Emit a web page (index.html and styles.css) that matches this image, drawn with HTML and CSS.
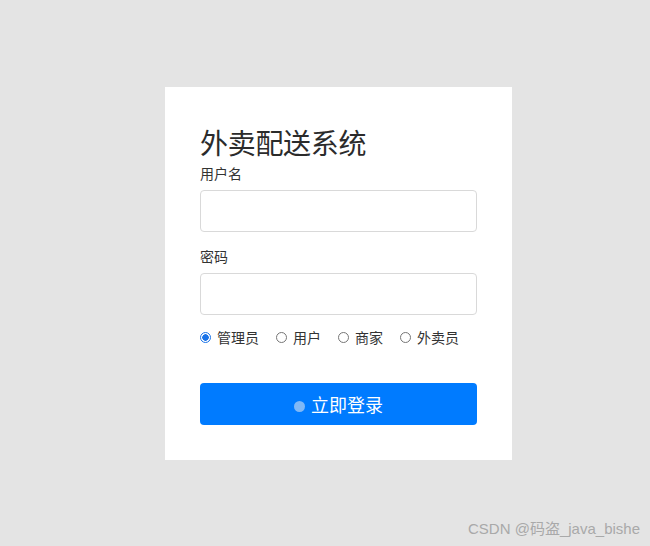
FILE: index.html
```html
<!DOCTYPE html>
<html lang="zh-CN">
<head>
<meta charset="utf-8">
<title>外卖配送系统</title>
<link rel="stylesheet" href="styles.css">
</head>
<body>
<div class="page">
  <form class="card">
    <h1 class="title">外卖配送系统</h1>
    <label class="label">用户名</label>
    <input class="input" type="text">
    <label class="label label-gap">密码</label>
    <input class="input" type="password">
    <div class="roles">
      <span class="role"><span class="radio checked"></span>管理员</span>
      <span class="role"><span class="radio"></span>用户</span>
      <span class="role"><span class="radio"></span>商家</span>
      <span class="role"><span class="radio"></span>外卖员</span>
    </div>
    <button class="btn" type="button"><span class="dot"></span>立即登录</button>
  </form>
</div>
<div class="watermark">CSDN @码盗_java_bishe</div>
</body>
</html>
```
FILE: styles.css
```css
html, body {
  margin: 0;
  padding: 0;
  background: #e4e4e4;
  height: 546px;
  overflow: hidden;
  font-family: "Noto Sans CJK SC", "Noto Sans", sans-serif;
  color: #333;
}
.page {
  padding: 87px 0 0 165px;
}
.card {
  box-sizing: border-box;
  width: 347px;
  height: 373px;
  background: #fff;
  padding: 35px 35px 0 35px;
  display: flex;
  flex-direction: column;
}
.title {
  margin: 0;
  font-size: 28px;
  line-height: 41px;
  font-weight: 400;
  color: #2b2b2b;
  letter-spacing: -0.3px;
}
.label {
  font-size: 14px;
  line-height: 20px;
  margin-top: 0;
  margin-bottom: 7px;
  color: #333;
}
.label-gap {
  margin-top: 14px;
}
.input {
  box-sizing: border-box;
  width: 277px;
  height: 42px;
  border: 1px solid #d9d9d9;
  border-radius: 4px;
  outline: none;
  margin: 0;
  padding: 0 10px;
}
.roles {
  display: flex;
  align-items: center;
  gap: 17px;
  margin-top: 12px;
  font-size: 14px;
  line-height: 20px;
  color: #333;
}
.role {
  display: flex;
  align-items: center;
  gap: 6px;
}
.radio {
  box-sizing: border-box;
  width: 11px;
  height: 11px;
  border: 1px solid #767676;
  border-radius: 50%;
  background: #fff;
}
.radio.checked {
  border-color: #1a73e8;
  background: radial-gradient(circle, #1a73e8 0 3px, #fff 3.5px);
}
.btn {
  margin-top: 36px;
  width: 277px;
  height: 42px;
  border: none;
  border-radius: 4px;
  background: #007bff;
  color: #fff;
  font-family: "Noto Sans CJK SC", "Noto Sans", sans-serif;
  font-size: 18px;
  display: flex;
  align-items: center;
  justify-content: center;
  gap: 6px;
  padding: 0;
}
.dot {
  width: 11px;
  height: 11px;
  border-radius: 50%;
  background: #80b8f6;
  margin-top: 5px;
}
.watermark {
  position: absolute;
  right: 10px;
  bottom: 8px;
  font-family: "Liberation Sans", "Noto Sans CJK SC", sans-serif;
  font-size: 15px;
  color: #a9a9a9;
}
```
